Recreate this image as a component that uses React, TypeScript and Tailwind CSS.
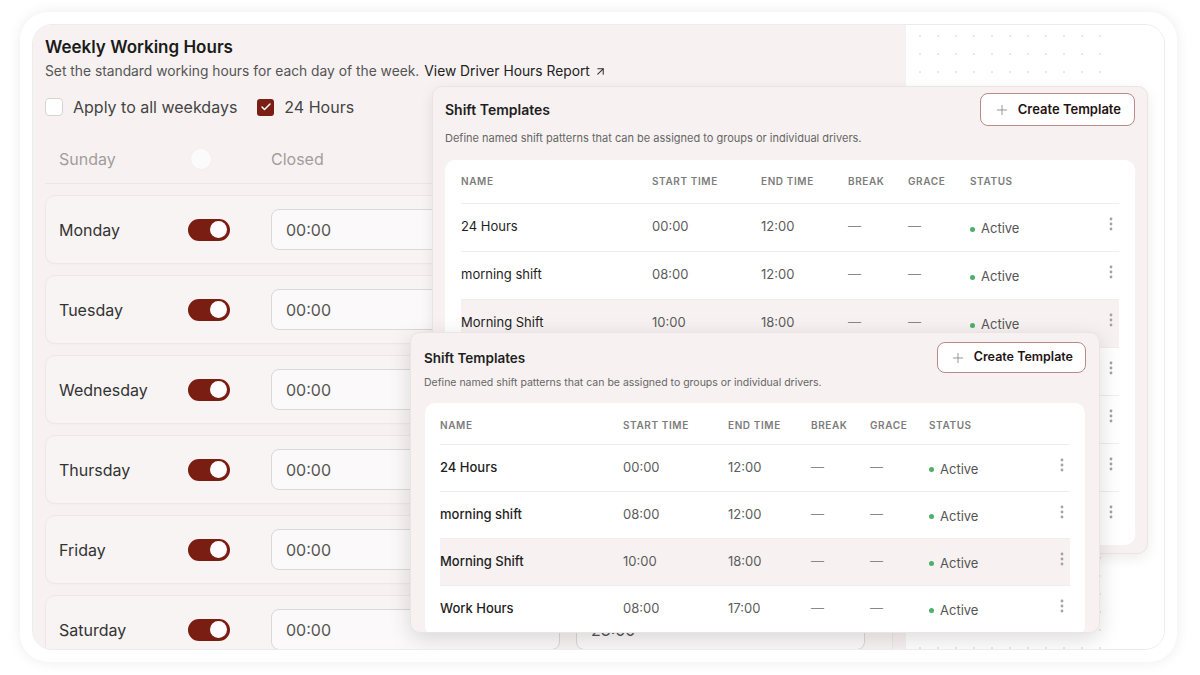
import { ArrowUpRight, Check, Plus } from "lucide-react";

const RED = "bg-[#7a1e13]";

type Shift = { name: string; start: string; end: string; hl?: boolean };

const shiftsLong: Shift[] = [
  { name: "24 Hours", start: "00:00", end: "12:00" },
  { name: "morning shift", start: "08:00", end: "12:00" },
  { name: "Morning Shift", start: "10:00", end: "18:00", hl: true },
  { name: "Work Hours", start: "08:00", end: "17:00" },
  { name: "Night Shift", start: "20:00", end: "04:00" },
  { name: "Weekend", start: "09:00", end: "15:00" },
  { name: "Split Shift", start: "06:00", end: "14:00" },
];

const days = ["Monday", "Tuesday", "Wednesday", "Thursday", "Friday", "Saturday"];

// three small dots, stacked
function Kebab() {
  return (
    <svg width="4" height="14" viewBox="0 0 4 14" className="text-[#a3a3a3]">
      <circle cx="2" cy="2" r="1.4" fill="currentColor" />
      <circle cx="2" cy="7" r="1.4" fill="currentColor" />
      <circle cx="2" cy="12" r="1.4" fill="currentColor" />
    </svg>
  );
}

function Toggle({ on }: { on: boolean }) {
  if (!on) {
    return (
      <div className="w-[42px] h-[22px] rounded-full flex items-center pl-[3px]">
        <div className="w-[20px] h-[20px] rounded-full bg-[#fcfbfb] shadow-[0_0_3px_rgba(0,0,0,0.03)]" />
      </div>
    );
  }
  return (
    <div className={`w-[42px] h-[22px] rounded-full ${RED} flex items-center justify-end pr-[3px]`}>
      <div className="w-[17px] h-[17px] rounded-full bg-white" />
    </div>
  );
}

function DayRow({ day }: { day: string }) {
  return (
    <div className="h-[69px] shrink-0 rounded-[10px] border border-[#eee7e6] bg-[#f8f4f3] flex items-center pl-[13px] pr-[14px] shadow-[0_1px_2px_rgba(0,0,0,0.02)]">
      <div className="w-[129px] text-[16px] text-[#333]">{day}</div>
      <Toggle on />
      <div className="ml-[41px] w-[289px] h-[41px] rounded-[8px] border border-[#dcd8d7] bg-[#fbf9f9] flex items-center pl-[14px] text-[16px] text-[#555]">
        00:00
      </div>
      <div className="ml-[16px] w-[289px] h-[41px] rounded-[8px] border border-[#dcd8d7] bg-[#fbf9f9] flex items-center pl-[14px] text-[16px] text-[#555]">
        23:00
      </div>
    </div>
  );
}

function ShiftCard({
  variant,
  rows,
}: {
  variant: "back" | "front";
  rows: Shift[];
}) {
  const back = variant === "back";
  const cols = back
    ? "grid-cols-[191px_109px_87px_60px_62px_1fr_16px]"
    : "grid-cols-[183px_105px_83px_59px_59px_1fr_16px]";
  const rowH = back ? "h-[48px]" : "h-[47px]";
  return (
    <div
      className={`w-full h-full rounded-[10px] bg-[#f7f2f1] border border-[#ebe4e3] overflow-hidden flex flex-col ${
        back
          ? "px-[12px] shadow-[0_4px_14px_rgba(0,0,0,0.08)]"
          : "px-[13px] shadow-[0_6px_22px_rgba(0,0,0,0.14)]"
      }`}
    >
      <div className={`flex items-center justify-between ${back ? "pt-[6px]" : "pt-[9px]"}`}>
        <div className={`font-semibold text-[#1f1f1f] ${back ? "text-[14px]" : "text-[13.5px] pt-[2px]"}`}>
          Shift Templates
        </div>
        <button
          className={`flex items-center gap-[8px] rounded-[8px] border border-[#b98a86] bg-white font-semibold text-[#1f1414] ${
            back ? "h-[33px] px-[13px] text-[13px]" : "h-[31px] px-[12px] text-[12.5px]"
          }`}
        >
          <Plus size={16} strokeWidth={1.3} className="text-[#8a8a8a]" />
          Create Template
        </button>
      </div>
      <div className={`text-[#666] ${back ? "text-[11px] mt-[4px]" : "text-[10.5px] mt-[2px]"}`}>
        Define named shift patterns that can be assigned to groups or individual drivers.
      </div>
      <div
        className={`bg-white rounded-[10px] flex-1 flex flex-col ${
          back ? "mt-[13px] mb-[8px] px-[16px]" : "mt-[12px] -mb-[4px] px-[15px] mx-[1px]"
        }`}
      >
        <div
          className={`grid ${cols} items-center shrink-0 text-[10px] font-semibold tracking-[0.06em] text-[#7c7c7c] ${
            back ? "h-[43px]" : "h-[41px] pt-[5px]"
          }`}
        >
          <div>NAME</div>
          <div>START TIME</div>
          <div>END TIME</div>
          <div>BREAK</div>
          <div>GRACE</div>
          <div>STATUS</div>
          <div />
        </div>
        {rows.map((r) => (
          <div
            key={r.name}
            className={`grid ${cols} items-center shrink-0 ${rowH} border-t border-[#efeded] text-[13px] ${
              r.hl ? "bg-[#f7f2f1]" : ""
            }`}
          >
            <div className={`${back ? "font-normal" : "font-medium"} text-[#1e1e1e]`}>{r.name}</div>
            <div className="text-[#5c5c5c]">{r.start}</div>
            <div className="text-[#5c5c5c]">{r.end}</div>
            <div className="text-[#888]">—</div>
            <div className="text-[#888]">—</div>
            <div className="flex items-center gap-[6px] mt-[4px] text-[#555]">
              <span className="w-[5px] h-[5px] rounded-full bg-[#4caf6a]" />
              Active
            </div>
            <div className="flex justify-center -mt-[6px]">
              <Kebab />
            </div>
          </div>
        ))}
      </div>
    </div>
  );
}

export default function App() {
  return (
    <div className="w-[1200px] h-[675px] bg-white overflow-hidden pt-[12px] pl-[20px] font-['Inter',sans-serif]">
      <div className="w-[1157px] h-[650px] rounded-[28px] bg-white shadow-[0_0_14px_rgba(0,0,0,0.08)] p-[12px]">
        <div className="relative w-full h-full rounded-[20px] border border-[#ececec] overflow-hidden flex">
          {/* weekly hours panel */}
          <div className="w-[873px] h-full bg-[#f7f2f1] pl-[12px] pr-[13px] flex flex-col overflow-hidden">
            <div className="pt-[10px] text-[17px] leading-[24px] font-semibold text-[#1b1b1b]">
              Weekly Working Hours
            </div>
            <div className="mt-[2px] text-[13.8px] leading-[20px] text-[#555] flex items-center">
              Set the standard working hours for each day of the week.
              <span className="ml-[5px] text-[#222]">View Driver Hours Report</span>
              <ArrowUpRight size={13} strokeWidth={2} className="ml-[4px] text-[#333]" />
            </div>
            <div className="mt-[14px] h-[24px] flex items-center text-[16px] text-[#444]">
              <div className="w-[18px] h-[18px] rounded-[4px] border border-[#d9d4d3] bg-white" />
              <span className="ml-[10px]">Apply to all weekdays</span>
              <div className={`ml-[20px] w-[17px] h-[17px] rounded-[3px] ${RED} flex items-center justify-center`}>
                <Check size={12} strokeWidth={3} className="text-white" />
              </div>
              <span className="ml-[10px]">24 Hours</span>
            </div>
            <div className="mt-[15px] h-[50px] shrink-0 flex items-center pl-[14px] border-b border-[#ece6e5] text-[16px] text-[#a29d9c]">
              <div className="w-[129px]">Sunday</div>
              <Toggle on={false} />
              <div className="ml-[41px]">Closed</div>
            </div>
            <div className="mt-[11px] flex flex-col gap-[11px]">
              {days.map((d) => (
                <DayRow key={d} day={d} />
              ))}
            </div>
          </div>
          {/* dotted canvas */}
          <div className="flex-1 h-full bg-white flex">
            <div className="w-[195px] h-full bg-[radial-gradient(#ebe7e7_1px,transparent_1.3px)] bg-[size:18px_18px] bg-[position:5px_2px]" />
          </div>

          {/* overlay cards */}
          <div className="absolute left-[399px] top-[61px] w-[716px] h-[468px]">
            <ShiftCard variant="back" rows={shiftsLong} />
          </div>
          <div className="absolute left-[377px] top-[307px] w-[690px] h-[301px]">
            <ShiftCard variant="front" rows={shiftsLong.slice(0, 4)} />
          </div>
        </div>
      </div>
    </div>
  );
}
